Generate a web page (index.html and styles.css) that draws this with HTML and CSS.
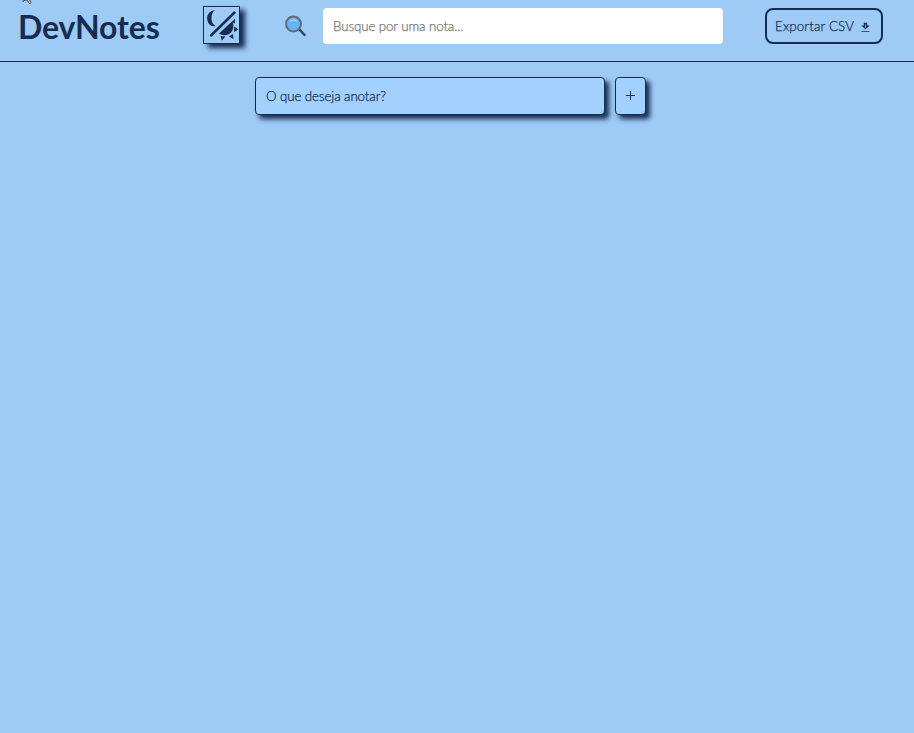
FILE: index.html
```html
<!DOCTYPE html>
<html lang="pt-BR">
<head>
<meta charset="UTF-8">
<title>DevNotes</title>
<link rel="stylesheet" href="styles.css">
</head>
<body>
<header class="header">
  <h1 class="logo">DevNotes</h1>
  <button class="theme" aria-label="Alternar tema">
    <svg width="35" height="36" viewBox="0 0 35 36">
      <path d="M11 3C5 4 2.800 8 3.200 12C3.600 17 7 20 11.500 19C8.500 17.500 7.500 14.500 7.500 11C7.500 7.500 8.500 5 11 3Z"/>
      <path class="slash" d="M7 28.500L30.500 5.500"/>
      <path d="M28.500 14C30 18.500 29.500 23.500 26 26.500C22.500 29 18 28.500 15 26.500Z"/>
      <path d="M28 15L31 11.500L31 16.500Z M30.300 19.500L34.500 22.500L30 25Z M25 29.500L29 27L29.500 32Z M16.500 29L21.500 29.500L17.800 33.500Z"/>
    </svg>
  </button>
  <div class="search">
    <svg class="lens" width="24" height="24" viewBox="0 0 24 24">
      <path class="handle" d="M15.500 15.500L20.500 21"/>
      <circle class="glass" cx="9.500" cy="10" r="7.500"/>
      <path class="shine" d="M6.200 7.200Q9.500 4.500 12.800 7.200"/>
    </svg>
    <input class="search-input" type="text" placeholder="Busque por uma nota...">
  </div>
  <button class="export"><span>Exportar CSV</span>
    <svg width="10" height="12" viewBox="0 0 10 12">
      <path class="arrow" d="M3.500 1.500H5.500V4.200H7L4.500 6.600L2 4.200H3.500Z"/>
      <path class="base" d="M.5 9.500H8.500"/>
    </svg>
  </button>
</header>
<main class="add-note">
  <input class="note-input" type="text" placeholder="O que deseja anotar?">
  <button class="add" aria-label="Adicionar"><svg width="9" height="9" viewBox="0 0 9 9"><path d="M0 4.500H9M4.500 0V9"/></svg></button>
</main>
<svg class="pointer" width="14" height="5" viewBox="0 0 14 5"><path d="M3 0V1.500L5 0L7 0L9.500 3.500L11 2.800L9.500 0"/></svg>
</body>
</html>
```
FILE: styles.css
```css
* { box-sizing: border-box; }
body {
  margin: 0;
  min-height: 100vh;
  background: #9ecaf6;
  color: #162d50;
  font-family: Lato, sans-serif;
  overflow: hidden;
}
button, input { font: 300 13.33px Lato, sans-serif; color: inherit; margin: 0; -webkit-text-stroke: .25px currentColor; }
.header {
  display: flex;
  align-items: flex-start;
  height: 62px;
  padding: 6px 31px 0 18px;
  border-bottom: 1px solid #162d50;
}
.logo { width: 185px; margin: 1px 0 0; font-size: 32px; line-height: 40px; letter-spacing: -.1px; }
.theme {
  width: 37px;
  height: 38px;
  padding: 0;
  border: 1px solid #162d50;
  background: #9ecaf6;
  box-shadow: 5px 4px 5px #162d50;
}
.theme svg { display: block; fill: #162d50; }
.theme .slash { stroke: #162d50; stroke-width: 2.500; stroke-linecap: round; }
.search { display: flex; align-items: center; gap: 15px; margin: 2px 0 0 44px; }
.handle { stroke: #35454c; stroke-width: 2.500; stroke-linecap: round; }
.glass { fill: #65b5f8; stroke: #626b72; stroke-width: 2; }
.shine { fill: none; stroke: #b5dcfb; stroke-width: 1.200; }
.search-input {
  width: 400px;
  height: 36px;
  padding: 0 10px;
  border: 0;
  border-radius: 4px;
  background: #fff;
  letter-spacing: -.1px;
}
.search-input::placeholder { color: #757575; }
.export {
  display: flex;
  align-items: center;
  gap: 7px;
  width: 118px;
  height: 36px;
  margin: 2px 0 0 auto;
  padding: 0 8px;
  border: 2px solid #162d50;
  border-radius: 8px;
  background: transparent;
  white-space: nowrap;
  letter-spacing: .15px;
}
.export span { width: 79px; text-align: left; }
.export svg { flex: none; margin-top: 3px; }
.arrow { fill: none; stroke: #162d50; stroke-width: 1.300; }
.base { stroke: #35577d; stroke-width: 1; }
.add-note { display: flex; gap: 10px; margin: 15px 0 0 255px; }
.note-input, .add {
  height: 38px;
  border: 1px solid #162d50;
  border-radius: 4px;
  background: #a2d0ff;
  box-shadow: 4px 4px 5px #162d50;
}
.note-input { width: 350px; padding: 0 10px; letter-spacing: -.1px; }
.note-input::placeholder { color: #162d50; }
.add { display: flex; align-items: center; justify-content: center; width: 31px; padding: 0 0 1px; }
.add path { stroke: #162d50; stroke-width: 1; }
.pointer { position: absolute; left: 20px; top: 0; fill: #d3e5f5; stroke: #36414e; }
```
